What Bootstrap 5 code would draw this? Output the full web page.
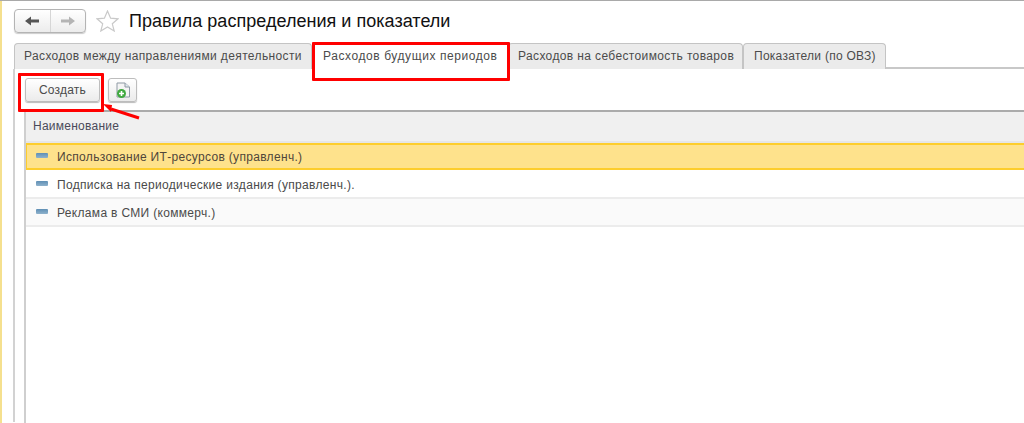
<!DOCTYPE html>
<html lang="ru">
<head>
<meta charset="utf-8">
<title>Правила распределения и показатели</title>
<link href="https://cdn.jsdelivr.net/npm/bootstrap@5.3.0/dist/css/bootstrap.min.css" rel="stylesheet">
<style>
html,body{height:423px;overflow:hidden;background:#fff}
body{font-family:"Liberation Sans",Arial,sans-serif;font-size:12px;color:#4b4b4b;border-top:1px solid #a9a9a9;position:relative}
.strip{width:2px;background:#f5e08e;flex:none}
.shell{width:1024px;height:422px}
.main{flex:1;min-width:0;padding:8px 0 0 11px}
.headline{height:24px;padding-left:1px}
.navgroup{width:72px;height:24px;border:1px solid #b4b4b4;border-radius:4px;background:linear-gradient(#fff,#ececec);box-shadow:0 1px 1px #ccc}
.navgroup>div{flex:1;height:100%}
.navgroup>div:first-child{border-right:1px solid #d6d6d6}
.star{margin-left:10px;margin-right:10px}
.ttl{font-size:18px;letter-spacing:.03px;color:#111;line-height:24px;margin:0;font-weight:400;white-space:nowrap}
.tabrow{margin-top:10px;height:26px;border-bottom:2px solid #c8c8c8;margin-left:1px;position:relative}
.tabx{height:26px;background:#ebebeb;border:1px solid #c4c4c4;border-bottom:0;border-radius:4px 4px 0 0;padding:4px 9px 0;white-space:nowrap;letter-spacing:.37px;line-height:16px}
.tabx.on{background:#fff;position:relative;z-index:1;padding-left:10px;padding-top:4px;border-color:#fff;letter-spacing:.58px}
.t1{width:298px}.t2{width:196px}.t3{width:235px}.t4{width:143px;padding-left:10px!important;letter-spacing:.27px!important}
.body-panel{border-left:2px solid #d2d2d2;height:353px;padding-left:9px}
.tools{height:41px;padding:9px 0 0 1px;gap:8px}
.tbtn{height:24px;border:1px solid #bdbdbd;border-radius:3px;background:linear-gradient(#fff,#ebebeb);box-shadow:0 1px 1px #bbb;font-size:12px;color:#4b4b4b;padding:0;letter-spacing:.2px}
.b1{width:75px}.b2{width:29px}
.grid-wrap{border-left:2px solid #cfcfcf;border-top:2px solid #ababab;height:313px}
.headcell{height:31px;background:#f0f0f0;padding:6px 0 0 7px;color:#4a4a5a;letter-spacing:.25px;line-height:16px;border-bottom:2px solid #e6e6e6}
.rowx{height:28px;align-items:center;border-bottom:2px solid #ececec;padding-left:10px;padding-top:2px;letter-spacing:.32px;color:#4a4a4a}
.rowx.sel{background:#fee28c;border:2px solid #fdcd2d;border-left-width:1px;border-right:0;padding-left:9px;padding-top:0;height:27px;color:#50463a}
.rowx.alt{background:#fafafa}
.rowx.w{height:29px}
.rowx .dash{width:12px;height:5px;border-radius:1px;background:linear-gradient(#5f8fb5,#8fb2cc);margin:-3px 9px 0 0;flex:none}
.redbox{position:absolute;border:3px solid #f00;border-radius:1px;pointer-events:none;z-index:5}
.rb1{left:312px;top:41px;width:198px;height:39px}
.rb2{left:18px;top:72px;width:86px;height:39px}
.arrow{position:absolute;left:100px;top:100px;z-index:6}
</style>
</head>
<body>
<div class="d-flex shell">
  <div class="strip"></div>
  <div class="main">
    <div class="d-flex align-items-center headline">
      <div class="d-flex navgroup">
        <div class="d-flex align-items-center justify-content-center">
          <svg width="14" height="10" viewBox="0 0 14 10"><path d="M0 5 L6 0.5 V3.5 H14 V6.5 H6 V9.5 Z" fill="#555"/></svg>
        </div>
        <div class="d-flex align-items-center justify-content-center">
          <svg width="14" height="10" viewBox="0 0 14 10"><path d="M14 5 L8 0.5 V3.5 H0 V6.5 H8 V9.5 Z" fill="#b4b4b4"/></svg>
        </div>
      </div>
      <svg class="star" width="23" height="22" viewBox="0 0 23 22"><path d="M11.5 1 L14.6 8.2 L22 8.8 L16.3 13.8 L18.2 21 L11.5 17 L4.8 21 L6.7 13.8 L1 8.8 L8.4 8.2 Z" fill="#fff" stroke="#c9c9c9" stroke-width="1.2"/></svg>
      <h1 class="ttl">Правила распределения и показатели</h1>
    </div>
    <div class="d-flex tabrow">
      <div class="tabx t1">Расходов между направлениями деятельности</div>
      <div class="tabx t2 on">Расходов будущих периодов</div>
      <div class="tabx t3">Расходов на себестоимость товаров</div>
      <div class="tabx t4">Показатели (по ОВЗ)</div>
    </div>
    <div class="body-panel">
      <div class="d-flex tools">
        <button type="button" class="btn tbtn b1">Создать</button>
        <button type="button" class="btn tbtn b2 d-flex align-items-center justify-content-center">
          <svg width="16" height="18" viewBox="0 0 16 18"><path d="M2 2 H10 L14.5 6 V16 H2 Z" fill="#f4f4f4" stroke="#8f9aa5"/><path d="M10 2 V6 H14.5" fill="#dfe6ec" stroke="#8f9aa5"/><circle cx="6.5" cy="12.5" r="4.5" fill="#3fa93f"/><path d="M4 12.5 H9 M6.5 10 V15" stroke="#fff" stroke-width="1.6"/></svg>
        </button>
      </div>
      <div class="grid-wrap">
        <div class="headcell">Наименование</div>
        <div class="d-flex rowx sel"><span class="dash"></span>Использование ИТ-ресурсов (управленч.)</div>
        <div class="d-flex rowx w"><span class="dash"></span>Подписка на периодические издания (управленч.).</div>
        <div class="d-flex rowx alt"><span class="dash"></span>Реклама в СМИ (коммерч.)</div>
      </div>
    </div>
  </div>
</div>
<div class="redbox rb1"></div>
<div class="redbox rb2"></div>
<svg class="arrow" width="42" height="20" viewBox="0 0 42 20"><path d="M11 8 L39 17" stroke="#f00" stroke-width="3"/><path d="M3 3 L12 4 L11 11 Z" fill="#f00"/></svg>
<script src="https://cdn.jsdelivr.net/npm/bootstrap@5.3.0/dist/js/bootstrap.bundle.min.js"></script>
</body>
</html>
